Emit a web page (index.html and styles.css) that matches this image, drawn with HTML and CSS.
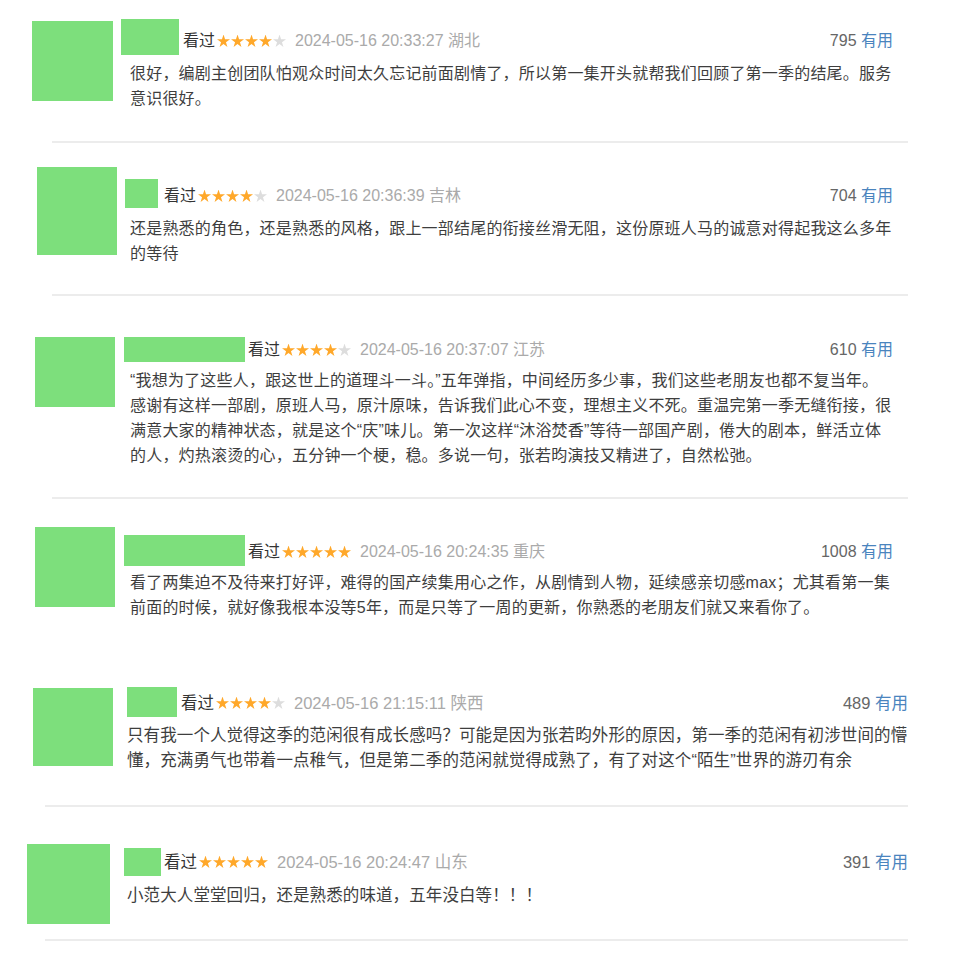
FILE: index.html
```html
<!DOCTYPE html>
<html lang="zh-CN">
<head>
  <meta charset="UTF-8">
  <title>短评</title>
  <link rel="stylesheet" href="styles.css">
</head>
<body>
  <div class="comments">

    <article class="review r1">
      <div class="row">
        <div class="avatar"></div>
        <div class="body">
          <div class="meta">
            <span class="name"></span>
            <span class="watched">看过</span>
            <span class="stars"><b></b><b></b><b></b><b></b><b class="off"></b></span>
            <span class="time">2024-05-16 20:33:27 湖北</span>
            <span class="votes"><span class="count">795</span> <a class="useful">有用</a></span>
          </div>
          <p class="text">很好，编剧主创团队怕观众时间太久忘记前面剧情了，所以第一集开头就帮我们回顾了第一季的结尾。服务<br>意识很好。</p>
        </div>
      </div>
      <div class="sep"></div>
    </article>

    <article class="review r2">
      <div class="row">
        <div class="avatar"></div>
        <div class="body">
          <div class="meta">
            <span class="name"></span>
            <span class="watched">看过</span>
            <span class="stars"><b></b><b></b><b></b><b></b><b class="off"></b></span>
            <span class="time">2024-05-16 20:36:39 吉林</span>
            <span class="votes"><span class="count">704</span> <a class="useful">有用</a></span>
          </div>
          <p class="text">还是熟悉的角色，还是熟悉的风格，跟上一部结尾的衔接丝滑无阻，这份原班人马的诚意对得起我这么多年<br>的等待</p>
        </div>
      </div>
      <div class="sep"></div>
    </article>

    <article class="review r3">
      <div class="row">
        <div class="avatar"></div>
        <div class="body">
          <div class="meta">
            <span class="name"></span>
            <span class="watched">看过</span>
            <span class="stars"><b></b><b></b><b></b><b></b><b class="off"></b></span>
            <span class="time">2024-05-16 20:37:07 江苏</span>
            <span class="votes"><span class="count">610</span> <a class="useful">有用</a></span>
          </div>
          <p class="text">“我想为了这些人，跟这世上的道理斗一斗。”五年弹指，中间经历多少事，我们这些老朋友也都不复当年。<br>感谢有这样一部剧，原班人马，原汁原味，告诉我们此心不变，理想主义不死。重温完第一季无缝衔接，很<br>满意大家的精神状态，就是这个“庆”味儿。第一次这样“沐浴焚香”等待一部国产剧，倦大的剧本，鲜活立体<br>的人，灼热滚烫的心，五分钟一个梗，稳。多说一句，张若昀演技又精进了，自然松弛。</p>
        </div>
      </div>
      <div class="sep"></div>
    </article>

    <article class="review r4">
      <div class="row">
        <div class="avatar"></div>
        <div class="body">
          <div class="meta">
            <span class="name"></span>
            <span class="watched">看过</span>
            <span class="stars"><b></b><b></b><b></b><b></b><b></b></span>
            <span class="time">2024-05-16 20:24:35 重庆</span>
            <span class="votes"><span class="count">1008</span> <a class="useful">有用</a></span>
          </div>
          <p class="text">看了两集迫不及待来打好评，难得的国产续集用心之作，从剧情到人物，延续感亲切感max；尤其看第一集<br>前面的时候，就好像我根本没等5年，而是只等了一周的更新，你熟悉的老朋友们就又来看你了。</p>
        </div>
      </div>
    </article>

    <article class="review r5">
      <div class="row">
        <div class="avatar"></div>
        <div class="body">
          <div class="meta">
            <span class="name"></span>
            <span class="watched">看过</span>
            <span class="stars"><b></b><b></b><b></b><b></b><b class="off"></b></span>
            <span class="time">2024-05-16 21:15:11 陕西</span>
            <span class="votes"><span class="count">489</span> <a class="useful">有用</a></span>
          </div>
          <p class="text">只有我一个人觉得这季的范闲很有成长感吗？可能是因为张若昀外形的原因，第一季的范闲有初涉世间的懵<br>懂，充满勇气也带着一点稚气，但是第二季的范闲就觉得成熟了，有了对这个“陌生”世界的游刃有余</p>
        </div>
      </div>
      <div class="sep"></div>
    </article>

    <article class="review r6">
      <div class="row">
        <div class="avatar"></div>
        <div class="body">
          <div class="meta">
            <span class="name"></span>
            <span class="watched">看过</span>
            <span class="stars"><b></b><b></b><b></b><b></b><b></b></span>
            <span class="time">2024-05-16 20:24:47 山东</span>
            <span class="votes"><span class="count">391</span> <a class="useful">有用</a></span>
          </div>
          <p class="text">小范大人堂堂回归，还是熟悉的味道，五年没白等！！！</p>
        </div>
      </div>
      <div class="sep"></div>
    </article>

  </div>
</body>
</html>
```

FILE: styles.css
```css
:root {
  --green: #7ddf7c;
  --text: #3e3e3e;
  --muted: #aaa;
  --link: #4a84be;
  --star: #ffa82a;
  --line: #ececec;
}

body {
  margin: 0;
  background: #fff;
  color: var(--text);
  font-family: "Liberation Sans", "Noto Sans CJK SC", sans-serif;
  font-size: 16px;
}

.comments {
  width: 960px;
}

/* each screenshot piece has its own offsets, kept in variables */
.r1 {
  --av-left: 32px; --av-top: 21px; --av-w: 81px; --av-h: 80px;
  --body-gap: 8px; --body-top: 29px;
  --name-w: 58px; --name-h: 36px; --name-dy: -10px; --watched-gap: 4px;
  --text-gap: 8px; --indent: 9px; --right: 893px;
  --sep-top: 30px; --sep-left: 52px;
}

.r2 {
  --av-left: 37px; --av-top: 24px; --av-w: 80px; --av-h: 88px;
  --body-gap: 8px; --body-top: 41px;
  --name-w: 33px; --name-h: 29px; --name-dy: -5px; --watched-gap: 6px;
  --text-gap: 8px; --indent: 5px; --right: 893px;
  --sep-top: 28px; --sep-left: 52px;
}

.r3 {
  --av-left: 35px; --av-top: 41px; --av-w: 80px; --av-h: 70px;
  --body-gap: 9px; --body-top: 42px;
  --name-w: 121px; --name-h: 25px; --name-dy: -1px; --watched-gap: 3px;
  --text-gap: 6px; --indent: 6px; --right: 893px;
  --sep-top: 29px; --sep-left: 52px;
}

.r4 {
  --av-left: 35px; --av-top: 28px; --av-w: 80px; --av-h: 80px;
  --body-gap: 9px; --body-top: 41px;
  --name-w: 121px; --name-h: 31px; --name-dy: -5px; --watched-gap: 3px;
  --text-gap: 6px; --indent: 6px; --right: 893px;
}

.r5 {
  --av-left: 33px; --av-top: 68px; --av-w: 80px; --av-h: 78px;
  --body-gap: 14px; --body-top: 71px;
  --name-w: 50px; --name-h: 30px; --name-dy: -4px; --watched-gap: 4px;
  --text-gap: 8px; --indent: 0px; --right: 908px;
  --sep-top: 32px; --sep-left: 45px;
  --ls: 0.1px;
  font-size: 16.5px;
}

.r6 {
  --av-left: 27px; --av-top: 37px; --av-w: 83px; --av-h: 80px;
  --body-gap: 14px; --body-top: 43px;
  --name-w: 37px; --name-h: 28px; --name-dy: -2px; --watched-gap: 3px;
  --text-gap: 9px; --indent: 3px; --right: 908px;
  --sep-top: 15px; --sep-left: 45px;
  --ls: 0.1px;
  font-size: 16.5px;
}

.row {
  display: flex;
  align-items: flex-start;
  width: var(--right);
}

.avatar {
  flex: none;
  width: var(--av-w);
  height: var(--av-h);
  margin: var(--av-top) 0 0 var(--av-left);
  background: var(--green);
}

.body {
  flex: 1;
  min-width: 0;
  margin: var(--body-top) 0 0 var(--body-gap);
}

.meta {
  display: flex;
  align-items: center;
  height: 24px;
  line-height: 24px;
  white-space: nowrap;
}

.name {
  flex: none;
  align-self: flex-start;
  width: var(--name-w);
  height: var(--name-h);
  margin-top: var(--name-dy);
  background: var(--green);
}

.watched {
  margin-left: var(--watched-gap);
  color: #333;
}

.stars {
  display: flex;
  gap: 1px;
  margin-left: 2px;
}

.stars b {
  width: 13px;
  height: 13px;
  background: var(--star);
  clip-path: polygon(50% 0%, 62% 36%, 100% 37%, 69% 59%, 80% 96%, 50% 74%, 20% 96%, 31% 59%, 0% 37%, 38% 36%);
}

.stars b.off {
  background: #ddd;
}

.time {
  margin-left: 9px;
  color: var(--muted);
}

.votes {
  margin-left: auto;
}

.count {
  color: #666;
}

.useful {
  color: var(--link);
  text-decoration: none;
}

.text {
  margin: var(--text-gap) -30px 0 var(--indent);
  line-height: 25px;
  letter-spacing: var(--ls, 0.2px);
  white-space: nowrap;
}

.sep {
  height: 2px;
  margin: var(--sep-top) 52px 0 var(--sep-left);
  background: var(--line);
}
```
